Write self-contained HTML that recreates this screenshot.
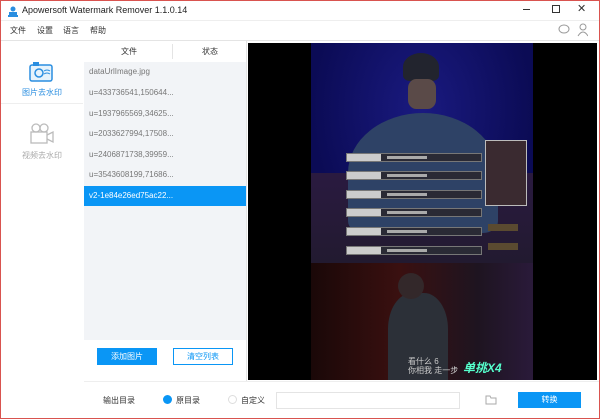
<!DOCTYPE html><html><head><meta charset="utf-8"><style>
*{margin:0;padding:0;box-sizing:border-box}
body{width:600px;height:419px;overflow:hidden;background:#fff;font-family:"Liberation Sans","Noto Sans CJK SC",sans-serif;position:relative}
.a{position:absolute}
.t{font-size:8px;color:#333}
.row{position:absolute;left:84px;width:162px;height:20px;font-size:8px;color:#777;padding-left:5px;line-height:20px}
.sb{position:absolute;left:98px;width:136px;height:9px;background:#2a2a35;border:1px solid #777}
.sb:before{content:"";position:absolute;left:0;top:0;width:34px;height:7px;background:#ccc}
.sb:after{content:"";position:absolute;left:40px;top:2px;width:40px;height:3px;background:#aaa}
</style></head><body>
<div class="a" style="left:0;top:0;width:600px;height:419px;border:1px solid #d9534f;z-index:9;pointer-events:none"></div>
<div class="a" style="left:8px;top:4px;width:10px;height:11px">
<svg width="10" height="11"><circle cx="5" cy="3" r="2.5" fill="#2a8ee0"/><rect x="1" y="6" width="8" height="3" fill="#2a8ee0"/><rect x="0" y="9" width="10" height="2" fill="#2a8ee0"/></svg></div>
<div class="a t" style="left:22px;top:5px;font-size:9px;color:#222">Apowersoft Watermark Remover 1.1.0.14</div>
<div class="a" style="left:523px;top:9px;width:7px;height:1px;background:#333"></div>
<div class="a" style="left:552px;top:5px;width:8px;height:8px;border:1px solid #333"></div>
<div class="a" style="left:577px;top:2px;font-size:11px;color:#333">✕</div>
<div class="a" style="left:0;top:20px;width:600px;height:1px;background:#eee"></div>
<div class="a t" style="left:10px;top:25px">文件</div><div class="a t" style="left:37px;top:25px">设置</div><div class="a t" style="left:63px;top:25px">语言</div><div class="a t" style="left:90px;top:25px">帮助</div>
<svg class="a" style="left:558px;top:23px" width="30" height="14"><ellipse cx="6" cy="6" rx="5" ry="4" fill="none" stroke="#999"/><circle cx="25" cy="4" r="3" fill="none" stroke="#999"/><path d="M20 13q5-8 10 0" fill="none" stroke="#999"/></svg>
<div class="a" style="left:0;top:40px;width:600px;height:1px;background:#e4e4e4"></div>
<svg class="a" style="left:29px;top:61px" width="24" height="21"><rect x="1" y="4" width="22" height="16" rx="2" fill="#e6f3fc" stroke="#2a8ee0" stroke-width="1.5"/><rect x="4" y="1" width="6" height="4" fill="#2a8ee0"/><circle cx="10" cy="12" r="4" fill="none" stroke="#2a8ee0" stroke-width="1.5"/><path d="M15 10q3-2 6 0M15 13q3-2 6 0" stroke="#2a8ee0" fill="none"/></svg>
<div class="a" style="left:22px;top:87px;font-size:8px;color:#2a8ee0">图片去水印</div>
<div class="a" style="left:0;top:103px;width:83px;height:1px;background:#eee"></div>
<svg class="a" style="left:27px;top:123px" width="28" height="22"><circle cx="9" cy="5" r="4" fill="none" stroke="#bbb" stroke-width="1.3"/><circle cx="17" cy="5" r="4" fill="none" stroke="#bbb" stroke-width="1.3"/><rect x="4" y="9" width="16" height="11" fill="none" stroke="#bbb" stroke-width="1.3"/><path d="M20 12l6-3v10l-6-3" fill="none" stroke="#bbb" stroke-width="1.3"/></svg>
<div class="a" style="left:22px;top:150px;font-size:8px;color:#aaa">视频去水印</div>
<div class="a" style="left:84px;top:41px;width:162px;height:340px;background:#f2f4f7"></div>
<div class="a" style="left:84px;top:41px;width:162px;height:21px;background:#fff"></div>
<div class="a t" style="left:121px;top:46px">文件</div>
<div class="a" style="left:172px;top:44px;width:1px;height:15px;background:#e4e4e4"></div>
<div class="a t" style="left:202px;top:46px">状态</div>
<div class="row" style="top:62px">dataUrlImage.jpg</div>
<div class="row" style="top:83px">u=433736541,150644...</div>
<div class="row" style="top:104px">u=1937965569,34625...</div>
<div class="row" style="top:124px">u=2033627994,17508...</div>
<div class="row" style="top:145px">u=2406871738,39959...</div>
<div class="row" style="top:165px">u=3543608199,71686...</div>
<div class="row" style="top:186px;background:#0a96f5;color:#fff">v2-1e84e26ed75ac22...</div>
<div class="a" style="left:84px;top:340px;width:162px;height:41px;background:#fff"></div>
<div class="a" style="left:97px;top:348px;width:60px;height:17px;background:#0a96f5;color:#fff;font-size:8px;text-align:center;line-height:17px">添加图片</div>
<div class="a" style="left:173px;top:348px;width:60px;height:17px;border:1px solid #0a96f5;color:#0a96f5;font-size:8px;text-align:center;line-height:15px">清空列表</div>
<div class="a" style="left:246px;top:41px;width:1px;height:340px;background:#e4e4e4"></div>
<div class="a" style="left:248px;top:43px;width:349px;height:337px;background:#000;overflow:hidden">
<div class="a" style="left:63px;top:0;width:222px;height:220px;background:radial-gradient(ellipse at 50% 30%,#1a1a80,#0b0b55 70%)"></div>
<div class="a" style="left:63px;top:130px;width:222px;height:90px;background:linear-gradient(#2a1a40,#221a30)"></div>
<div class="a" style="left:100px;top:70px;width:150px;height:120px;border-radius:50% 50% 10% 10%;background:#2e4266"></div>
<div class="a" style="left:155px;top:10px;width:36px;height:28px;border-radius:50% 50% 20% 20%;background:#22242e"></div>
<div class="a" style="left:160px;top:36px;width:28px;height:30px;border-radius:30%;background:#5a4a48"></div>
<div class="a" style="left:63px;top:220px;width:222px;height:117px;background:linear-gradient(90deg,#1a0808,#3a1010 40%,#1e1420 75%,#2a1a3a)"></div>
<div class="a" style="left:140px;top:250px;width:60px;height:90px;background:#2c3038;border-radius:40% 40% 0 0"></div>
<div class="a" style="left:150px;top:230px;width:26px;height:26px;background:#33282a;border-radius:50%"></div>
<div class="sb" style="top:110px"></div><div class="sb" style="top:128px"></div><div class="sb" style="top:147px"></div><div class="sb" style="top:165px"></div><div class="sb" style="top:184px"></div><div class="sb" style="top:203px"></div>
<div class="a" style="left:237px;top:97px;width:42px;height:66px;border:1px solid #bbb;background:#3a2a30"></div>
<div class="a" style="left:240px;top:181px;width:30px;height:7px;background:#5a4a30"></div>
<div class="a" style="left:240px;top:200px;width:30px;height:7px;background:#5a4a30"></div>
<div class="a" style="left:160px;top:314px;font-size:8px;color:#ccc;line-height:9px">看什么 6<br>你相我 走一步</div>
<div class="a" style="left:215px;top:316px;font-size:12px;font-weight:bold;color:#5fc;font-style:italic">单挑X4</div>
</div>
<div class="a" style="left:84px;top:381px;width:516px;height:1px;background:#eee"></div>
<div class="a t" style="left:103px;top:395px">输出目录</div>
<div class="a" style="left:163px;top:395px;width:9px;height:9px;border-radius:50%;background:#0a96f5"></div>
<div class="a t" style="left:176px;top:395px">原目录</div>
<div class="a" style="left:228px;top:395px;width:9px;height:9px;border-radius:50%;border:1px solid #ddd"></div>
<div class="a t" style="left:241px;top:395px">自定义</div>
<div class="a" style="left:276px;top:392px;width:184px;height:17px;border:1px solid #e4e4e4"></div>
<svg class="a" style="left:485px;top:395px" width="12" height="10"><path d="M1 1h4l1 2h5v6H1z" fill="none" stroke="#aaa"/></svg>
<div class="a" style="left:518px;top:392px;width:63px;height:16px;background:#0a96f5;color:#fff;font-size:8px;text-align:center;line-height:16px">转换</div>
</body></html>
